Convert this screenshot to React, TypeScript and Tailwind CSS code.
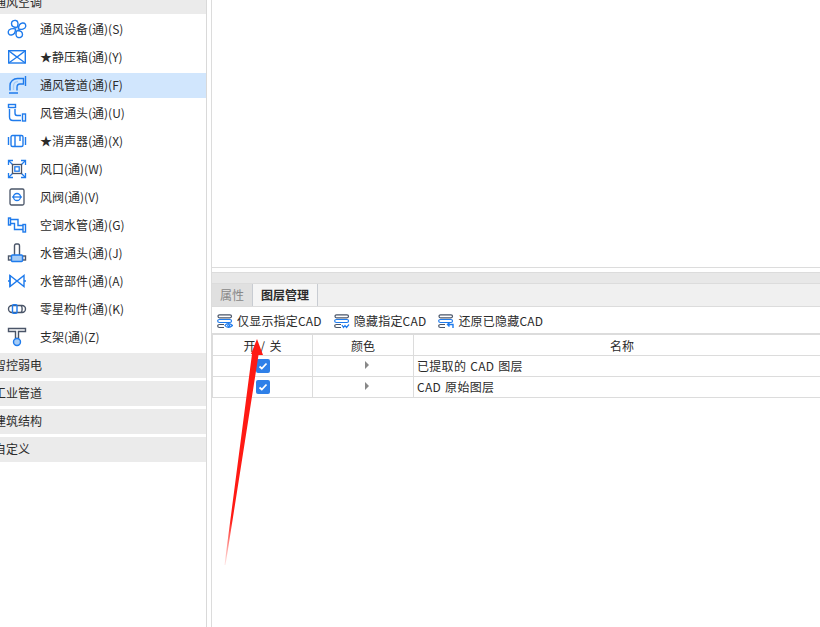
const font = { fontFamily: '"Noto Sans CJK SC", sans-serif' };

const blue = "#1f7bec";
const slate = "#4a5568";
const lightBlue = "#a6ccf6";

function FanIcon() {
  return (
    <svg width="20" height="20" viewBox="0 0 20 20" fill="none" stroke={blue} strokeWidth="1.4">
      <path d="M10 8.500C7 8.500 4.500 7.500 4.500 4.500 4.500 2 7 1 9 1.500 11.500 2 11.500 6 10 8.500z" />
      <path d="M11.500 10c0-3 1-5.500 4-6 2.500-.3 3.500 1.500 3.200 3.500-.4 2.500-4.500 3.500-7.200 2.500z" />
      <path d="M10 11.500c3 0 5.500 1 5.500 4 0 2.500-2.500 3.500-4.500 3-2.500-.5-2.500-4.500-1-7z" />
      <path d="M8.500 10c0 3-1 5.500-4 6-2.500.3-3.500-1.500-3.200-3.500.4-2.500 4.500-3.500 7.200-2.500z" />
    </svg>
  );
}

function BoxIcon() {
  return (
    <svg width="20" height="16" viewBox="0 0 20 16" fill="none" stroke={blue} strokeWidth="1.4">
      <rect x="1.700" y="1.700" width="16.600" height="12.300" />
      <path d="M1.700 1.700L10 8l8.300-6.300M1.700 14L10 8l8.300 6" />
    </svg>
  );
}

function DuctIcon() {
  return (
    <svg width="20" height="20" viewBox="0 0 20 20" fill="none" stroke={blue} strokeWidth="1.400">
      <path d="M3 15.500V10.500C3 6.500 6.500 3.500 10.500 3.500H16.500V9H13C11 9 10 10.500 10 12.500V15.500" />
      <path d="M18.500 1V11M2 18H11" />
      <path d="M6.500 15V11C6.500 8.500 8.500 6.500 11 6.500" stroke={lightBlue} />
    </svg>
  );
}

function ElbowIcon() {
  return (
    <svg width="20" height="20" viewBox="0 0 20 20" fill="none" stroke={blue} strokeWidth="1.400">
      <rect x="1.500" y="1.500" width="7" height="3" />
      <path d="M2.500 6v8c0 2 1.500 3.500 3.500 3.500h8M8 6v4c0 1.500.5 2.500 2 2.500h4" />
      <rect x="15.500" y="11" width="3" height="7" />
    </svg>
  );
}

function SilencerIcon() {
  return (
    <svg width="20" height="14" viewBox="0 0 20 14" fill="none" stroke={blue} strokeWidth="1.400">
      <path d="M1.500 3v8M18.500 3v8" />
      <rect x="4" y="1.500" width="12" height="11" rx="1.500" />
      <path d="M8 1.500V12.500M13 1.500V7" />
    </svg>
  );
}

function VentIcon() {
  return (
    <svg width="20" height="20" viewBox="0 0 20 20" fill="none" stroke={blue} strokeWidth="1.300">
      <path d="M1.500 6V1.500H6M14 1.500h4.500V6M1.500 14v4.500H6M14 18.500h4.500V14" />
      <path d="M2 2L5.500 5.500M18 2L14.500 5.500M2 18L5.500 14.500M18 18L14.500 14.500" />
      <rect x="5.500" y="5.500" width="9" height="9" stroke={slate} />
      <rect x="7.800" y="7.800" width="4.400" height="4.400" />
    </svg>
  );
}

function DamperIcon() {
  return (
    <svg width="16" height="18" viewBox="0 0 16 18" fill="none" stroke={blue} strokeWidth="1.300">
      <rect x="1" y="1" width="14" height="16" rx="1.500" stroke={slate} />
      <circle cx="8" cy="9" r="3.500" />
      <path d="M3 9h10" />
    </svg>
  );
}

function PipeIcon() {
  return (
    <svg width="20" height="16" viewBox="0 0 20 16" fill="none" stroke={blue} strokeWidth="1.400">
      <rect x="1.500" y="1" width="2" height="7" />
      <path d="M3.500 2.500H11V8.500H16M3.500 6.500H7.500V12.500H16" />
      <rect x="16" y="7.500" width="2.500" height="7.500" />
    </svg>
  );
}

function TeeIcon() {
  return (
    <svg width="20" height="20" viewBox="0 0 20 20" fill="none" stroke={slate} strokeWidth="1.400">
      <path d="M7.500 12V3c0-1 .5-2 1.500-2h2c1 0 1.500 1 1.500 2v9" />
      <rect x="1.500" y="13" width="3" height="4" />
      <rect x="15.500" y="13" width="3" height="4" />
      <rect x="4.500" y="12" width="11" height="6.500" rx="1" fill={lightBlue} stroke={blue} />
    </svg>
  );
}

function ValveIcon() {
  return (
    <svg width="20" height="14" viewBox="0 0 20 14" fill="none" stroke={blue} strokeWidth="1.400">
      <path d="M3 1.500l14 11v-11l-14 11z" />
      <path d="M1 7h2M17 7h2M3 1v12" />
    </svg>
  );
}

function FittingIcon() {
  return (
    <svg width="20" height="10" viewBox="0 0 20 10" fill="none" stroke={slate} strokeWidth="1.400">
      <rect x="1.500" y="1.500" width="17" height="7" rx="3.500" />
      <rect x="5.500" y="0.800" width="4.500" height="8.400" rx="1" stroke={blue} />
      <path d="M14 1.500c1.500 1 1.500 6 0 7" />
    </svg>
  );
}

function BracketIcon() {
  return (
    <svg width="20" height="20" viewBox="0 0 20 20" fill="none" stroke={slate} strokeWidth="1.400">
      <path d="M1.500 1.500h17v3h-7v7h-3v-7h-7z" />
      <circle cx="10" cy="15" r="3.500" fill={lightBlue} stroke={blue} />
    </svg>
  );
}

function LayerIcon({ kind }: { kind: "eye" | "wave" | "back" }) {
  return (
    <svg width="16" height="15" viewBox="0 0 16 15" fill="none" stroke={slate} strokeWidth="1.200">
      <rect x="1" y="0.800" width="13.500" height="3" rx="1.500" />
      <path d="M2.500 5.500C1.300 5.500.7 6 .7 7s.6 1.500 1.800 1.500H13c1 0 1.500-.5 1.500-1.500S14 5.500 13 5.500z" stroke={blue} />
      <path d="M2.500 10.500c-1.200 0-1.800.5-1.800 1.500s.6 1.500 1.800 1.500H7M2.500 10.500H7" />
      {kind === "eye" ? (
        <g stroke={blue}>
          <path d="M8 11.500c1.500-2.500 5-2.500 7.500 0-2.500 2.500-6 2.500-7.500 0z" />
          <circle cx="11.700" cy="11.500" r="1" />
        </g>
      ) : null}
      {kind === "wave" ? <path d="M8 11l1.500 2.500 1.500-2 1.500 2 2.500-3" stroke={blue} /> : null}
      {kind === "back" ? <path d="M15 14v-3.500H9.500M11.500 8.500l-2 2 2 2" stroke={blue} strokeWidth="1.400" /> : null}
    </svg>
  );
}

function Check() {
  return (
    <div className="flex h-[14px] w-[14px] items-center justify-center rounded-[2px] bg-[#2f80e8]">
      <svg width="10" height="10" viewBox="0 0 10 10" fill="none" stroke="white" strokeWidth="1.800">
        <path d="M1.500 5.500l2.300 2L8.500 2.500" />
      </svg>
    </div>
  );
}

const items = [
  { label: "通风设备(通)(S)", icon: <FanIcon /> },
  { label: "★静压箱(通)(Y)", icon: <BoxIcon /> },
  { label: "通风管道(通)(F)", icon: <DuctIcon />, active: true },
  { label: "风管通头(通)(U)", icon: <ElbowIcon /> },
  { label: "★消声器(通)(X)", icon: <SilencerIcon /> },
  { label: "风口(通)(W)", icon: <VentIcon /> },
  { label: "风阀(通)(V)", icon: <DamperIcon /> },
  { label: "空调水管(通)(G)", icon: <PipeIcon /> },
  { label: "水管通头(通)(J)", icon: <TeeIcon /> },
  { label: "水管部件(通)(A)", icon: <ValveIcon /> },
  { label: "零星构件(通)(K)", icon: <FittingIcon /> },
  { label: "支架(通)(Z)", icon: <BracketIcon /> },
];

const groups = ["智控弱电", "工业管道", "建筑结构", "自定义"];

const rows = ["已提取的 CAD 图层", "CAD 原始图层"];

export default function App() {
  return (
    <div className="relative flex h-[627px] w-[820px] overflow-hidden bg-white text-[12px] text-[#2b2b2b]" style={font}>
      <aside className="h-full w-[207px] shrink-0 overflow-hidden border-r border-[#d9d9d9]">
        <div className="-mt-[11px] flex h-[25px] items-center bg-[#ebebeb]">
          <span className="-ml-[6px]">通风空调</span>
        </div>
        <div className="pt-[1px]">
          {items.map((item) => (
            <div
              key={item.label}
              className={`flex h-[28px] items-center ${item.active ? "relative" : ""}`}
            >
              {item.active ? <div className="absolute inset-x-0 top-[2px] h-[25px] bg-[#d1e6fd]" /> : null}
              <div className="relative flex w-[40px] justify-center pr-[6px]">{item.icon}</div>
              <span className="relative">{item.label}</span>
            </div>
          ))}
        </div>
        <div className="mt-[2px] flex flex-col gap-[3px]">
          {groups.map((group) => (
            <div key={group} className="flex h-[25px] items-center bg-[#ebebeb] pb-[2px]">
              <span className="-ml-[6px]">{group}</span>
            </div>
          ))}
        </div>
      </aside>

      <main className="ml-[4px] flex h-full min-w-0 flex-1 flex-col border-l border-[#dcdcdc]">
        <div className="h-[268px] shrink-0 border-b border-[#dcdcdc]" />
        <div className="mt-[4px] h-[12px] shrink-0 border-y border-[#dcdcdc] bg-[#e8e8e8]" />
        <div className="flex h-[23px] shrink-0 border-b border-[#dcdcdc] bg-[#f0f0f0]">
          <div className="flex w-[41px] items-center justify-center border-r border-[#c8ccd2] bg-[#e0e0e0] text-[#888]">
            属性
          </div>
          <div className="flex w-[65px] items-center justify-center border-r border-[#c8ccd2] bg-[#f5f5f5] font-bold">
            图层管理
          </div>
        </div>
        <div className="flex h-[26px] shrink-0 items-center gap-[12px] pl-[5px] pt-[2px] tracking-[0.2px]">
          <div className="flex items-center gap-[4px]">
            <LayerIcon kind="eye" />
            <span>仅显示指定CAD</span>
          </div>
          <div className="flex items-center gap-[4px]">
            <LayerIcon kind="wave" />
            <span>隐藏指定CAD</span>
          </div>
          <div className="flex items-center gap-[4px]">
            <LayerIcon kind="back" />
            <span>还原已隐藏CAD</span>
          </div>
        </div>
        <div className="border-t-2 border-[#dcdcdc]">
          <div className="grid h-[21px] grid-cols-[101px_101px_1fr] border-b border-[#dcdcdc] pt-[2px]">
            <div className="-mt-[2px] flex items-center justify-center border-x border-[#dcdcdc] pt-[2px] [word-spacing:2px]">开 / 关</div>
            <div className="-mt-[2px] flex items-center justify-center border-r border-[#dcdcdc] pt-[2px]">颜色</div>
            <div className="flex items-center justify-center pl-[10px]">名称</div>
          </div>
          {rows.map((row) => (
            <div key={row} className="grid h-[21px] grid-cols-[101px_101px_1fr] border-b border-[#dcdcdc]">
              <div className="flex items-center justify-center border-x border-[#dcdcdc]">
                <Check />
              </div>
              <div className="flex items-center justify-center border-r border-[#dcdcdc] pb-[2px] pl-[8px]">
                <div className="h-0 w-0 border-y-[4px] border-l-[4px] border-y-transparent border-l-[#888]" />
              </div>
              <div className="flex items-center pl-[3px] tracking-[0.3px] [word-spacing:1px]">{row}</div>
            </div>
          ))}
        </div>
      </main>

      {/* annotation arrow drawn over the screenshot */}
      <svg className="absolute left-0 top-0" width="820" height="627" viewBox="0 0 820 627" fill="none">
        <defs>
          <linearGradient id="fade" x1="0" y1="1" x2="0" y2="0">
            <stop offset="0" stopColor="#ff2a20" stopOpacity="0.1" />
            <stop offset="0.2" stopColor="#ff1a14" />
          </linearGradient>
        </defs>
        <path d="M224.500 565L252 354 251 354 257 339 263 355 258.500 355 225.500 565z" fill="url(#fade)" />
      </svg>
    </div>
  );
}
